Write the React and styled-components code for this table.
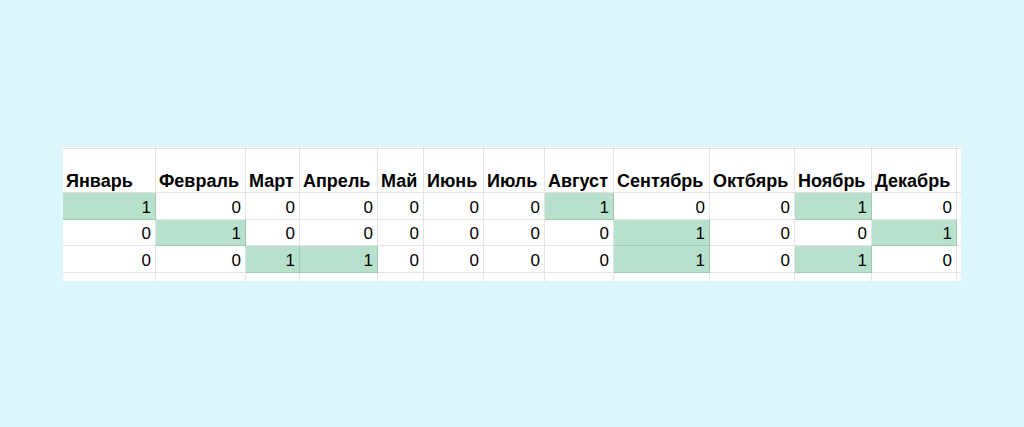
import React from "react";
import styled, { createGlobalStyle } from "styled-components";

const Global = createGlobalStyle`
  html, body { margin: 0; padding: 0; }
  body {
    background: #dbf7fd;
    font-family: "Liberation Sans", Arial, sans-serif;
  }
`;

const Page = styled.div`
  width: 1024px;
  height: 427px;
  display: flex;
  align-items: center;
  justify-content: center;
`;

const Sheet = styled.div`
  display: grid;
  grid-template-columns: 93px 90px 54px 78px 46px 60px 61px 69px 96px 85px 77px 85px 4px;
  grid-template-rows: 2px 44px 27px 26px 27px 8px;
  background: #ffffff;
  color: #000;
`;

const Cell = styled.div`
  box-sizing: border-box;
  border-right: ${(p) => (p.$last ? "none" : "1px solid rgba(0,0,0,0.11)")};
  border-bottom: ${(p) => (p.$open ? "none" : "1px solid rgba(0,0,0,0.11)")};
  background: ${(p) => (p.$hit ? "#b7e1cd" : "transparent")};
  display: flex;
  align-items: flex-end;
  overflow: hidden;
  white-space: nowrap;
`;

const Head = styled(Cell)`
  justify-content: flex-start;
  padding: 0 0 0 3px;
  font-weight: 700;
  font-size: 18px;
  line-height: 21px;
`;

const Num = styled(Cell)`
  justify-content: flex-end;
  padding: 0 4px 1px 0;
  font-size: 17px;
  line-height: 20px;
`;

const months = [
  "Январь", "Февраль", "Март", "Апрель", "Май", "Июнь",
  "Июль", "Август", "Сентябрь", "Октбярь", "Ноябрь", "Декабрь",
];

const rows = [
  [1, 0, 0, 0, 0, 0, 0, 1, 0, 0, 1, 0],
  [0, 1, 0, 0, 0, 0, 0, 0, 1, 0, 0, 1],
  [0, 0, 1, 1, 0, 0, 0, 0, 1, 0, 1, 0],
];

export default function App() {
  return (
    <>
      <Global />
      <Page>
        <Sheet>
          {months.map((m) => (
            <Cell key={"t" + m} />
          ))}
          <Cell $last />
          {months.map((m) => (
            <Head key={m}>{m}</Head>
          ))}
          <Cell $last />
          {rows.map((r, i) => (
            <React.Fragment key={i}>
              {r.map((v, j) => (
                <Num key={j} $hit={v === 1}>
                  {v}
                </Num>
              ))}
              <Cell $last />
            </React.Fragment>
          ))}
          {months.map((m) => (
            <Cell key={"b" + m} $open />
          ))}
          <Cell $last $open />
        </Sheet>
      </Page>
    </>
  );
}
